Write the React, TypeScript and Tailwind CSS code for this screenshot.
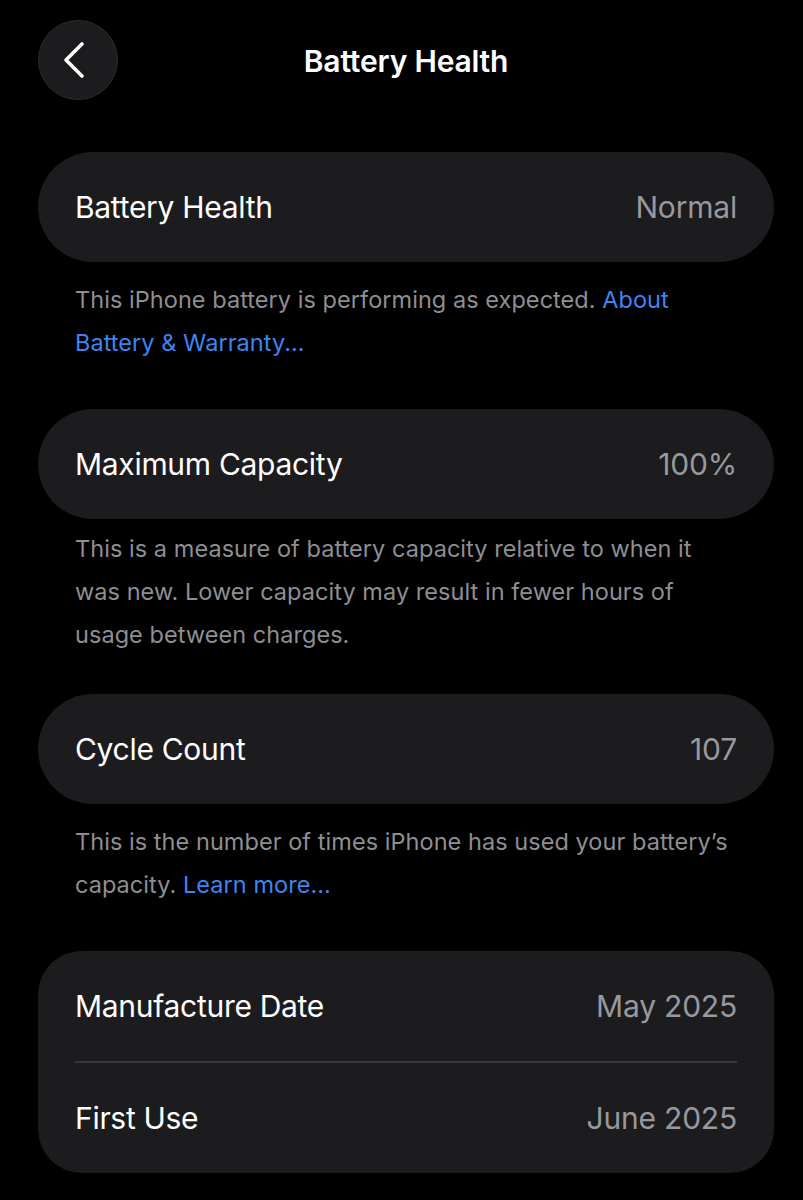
const font = { fontFamily: "Inter, 'Noto Sans', sans-serif" };

const Row = ({ label, value }: { label: string; value: string }) => (
  <div className="flex h-[110px] items-center justify-between px-[37px]">
    <span className="text-[30px] text-white tracking-[-0.3px]">{label}</span>
    <span className="text-[30px] text-[#98989e] tracking-[-0.2px]">{value}</span>
  </div>
);

const Caption = ({ children, className }: { children: React.ReactNode; className: string }) => (
  <p className={`px-[37px] text-[23.5px] leading-[43px] tracking-[0.05px] text-[#8e8e93] ${className}`}>{children}</p>
);

const Link = ({ children }: { children: React.ReactNode }) => (
  <span className="text-[#3f85f2]">{children}</span>
);

export default function App() {
  return (
    <div className="min-h-[1200px] w-full bg-black pl-[38px] pr-[29px] pt-[20px]" style={font}>
      <div className="grid h-[80px] grid-cols-[80px_1fr_80px] items-center">
        <button className="flex h-[80px] w-[80px] items-center justify-center rounded-full border border-[#2c2c2e] bg-[#1c1c1e]">
          <svg width="40" height="40" viewBox="0 0 40 40" fill="none" className="-ml-[2px]">
            <path d="M25 4 L9 20 L25 36" stroke="white" strokeWidth="3.6" strokeLinecap="round" strokeLinejoin="round" />
          </svg>
        </button>
        <h1 className="pt-[3px] text-center text-[30px] font-semibold tracking-[-0.2px] text-white">Battery Health</h1>
        <div />
      </div>

      <div className="mt-[52px] rounded-full bg-[#1c1c1e]">
        <Row label="Battery Health" value="Normal" />
      </div>
      <Caption className="mt-[16px] mb-[45px]">
        This iPhone battery is performing as expected. <Link>About Battery &amp; Warranty...</Link>
      </Caption>

      <div className="rounded-full bg-[#1c1c1e]">
        <Row label="Maximum Capacity" value="100%" />
      </div>
      <Caption className="mt-[8px] mb-[38px]">
        This is a measure of battery capacity relative to when it was new. Lower capacity may result in fewer hours of
        usage between charges.
      </Caption>

      <div className="rounded-full bg-[#1c1c1e]">
        <Row label="Cycle Count" value="107" />
      </div>
      <Caption className="mt-[16px] mb-[45px]">
        This is the number of times iPhone has used your battery’s capacity. <Link>Learn more...</Link>
      </Caption>

      <div className="rounded-[44px] bg-[#1c1c1e]">
        <Row label="Manufacture Date" value="May 2025" />
        <div className="mx-[37px] h-[2px] bg-[#38383a]" />
        <Row label="First Use" value="June 2025" />
      </div>
    </div>
  );
}
